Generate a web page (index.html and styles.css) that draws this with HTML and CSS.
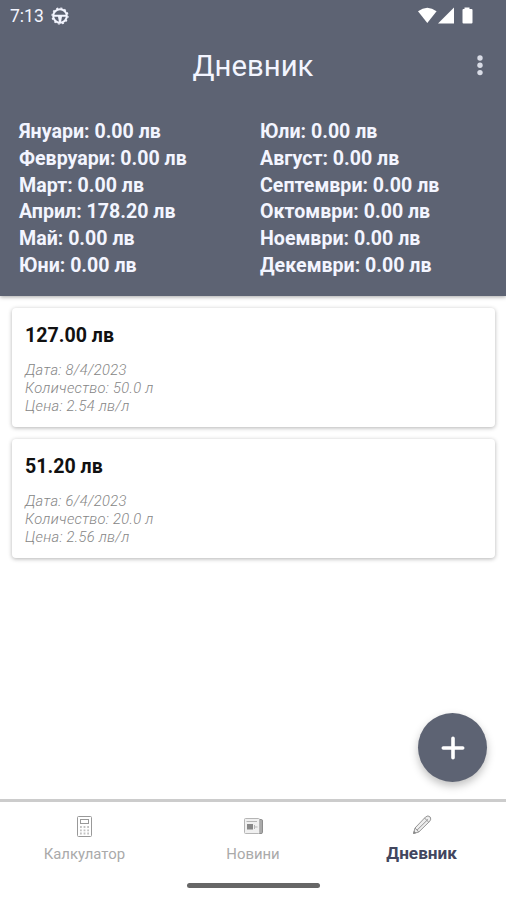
FILE: index.html
```html
<!DOCTYPE html>
<html lang="bg">
<head>
<meta charset="utf-8">
<title>Дневник</title>
<link rel="stylesheet" href="styles.css">
</head>
<body>
<div class="app">
  <header class="header">
    <div class="status">
      <span class="clock">7:13</span>
      <svg class="wheel" width="18" height="18" viewBox="0 0 18 18"><circle cx="9" cy="9" r="6.800" fill="none" stroke="#f3f5ff" stroke-width="2"/><circle cx="9" cy="9" r="8" fill="none" stroke="#f3f5ff" stroke-width="1.200" stroke-dasharray="2 2.200"/><path d="M2.500 7.700H15.500V9.700H11L10 15H8L7 9.700H2.500Z" fill="#f3f5ff"/></svg>
      <svg class="signals" width="56" height="18" viewBox="0 0 56 18" fill="#fff"><path d="M0 4.200Q9.300-2.800 18.600 4.200L9.300 16Z"/><path d="M20 16.500L36 .5V16.500Z"/><path d="M44.500 3Q44.500 2 45.500 2H46.500V.5H51.500V2H53.500Q54.500 2 54.500 3V15.500Q54.500 16.500 53.500 16.500H45.500Q44.500 16.500 44.500 15.500Z"/></svg>
    </div>
    <div class="toolbar">
      <h1>Дневник</h1>
      <svg class="more" width="8" height="22" viewBox="0 0 8 22" fill="#d9dce6"><circle cx="4" cy="3" r="2.700"/><circle cx="4" cy="10.300" r="2.700"/><circle cx="4" cy="17.600" r="2.700"/></svg>
    </div>
    <div class="months">
      <div><p>Януари: 0.00 лв</p><p>Февруари: 0.00 лв</p><p>Март: 0.00 лв</p><p>Април: 178.20 лв</p><p>Май: 0.00 лв</p><p>Юни: 0.00 лв</p></div>
      <div><p>Юли: 0.00 лв</p><p>Август: 0.00 лв</p><p>Септември: 0.00 лв</p><p>Октомври: 0.00 лв</p><p>Ноември: 0.00 лв</p><p>Декември: 0.00 лв</p></div>
    </div>
  </header>
  <main class="list">
    <article class="card"><h2>127.00 лв</h2><p>Дата: 8/4/2023</p><p>Количество: 50.0 л</p><p>Цена: 2.54 лв/л</p></article>
    <article class="card"><h2>51.20 лв</h2><p>Дата: 6/4/2023</p><p>Количество: 20.0 л</p><p>Цена: 2.56 лв/л</p></article>
    <button class="fab" aria-label="Добави"><svg width="24" height="24" viewBox="0 0 24 24"><path d="M12 2.300V21.700M2.300 12H21.700" stroke="#fff" stroke-width="3.600" stroke-linecap="round"/></svg></button>
  </main>
  <nav class="tabs">
    <div class="tab"><svg width="24" height="24" viewBox="0 0 24 24" fill="none" stroke="#999"><rect x="5.500" y="2.500" width="14" height="20" rx="1"/><rect x="8.500" y="5.500" width="8" height="4"/><path d="M8 13H17M8 16.300H17M8 19.500H17" stroke-width="1.800" stroke-dasharray="1.800 1.800" stroke="#c2c2c2"/></svg><span>Калкулатор</span></div>
    <div class="tab"><svg width="24" height="24" viewBox="0 0 24 24" fill="none" stroke="#b5b5b5"><path d="M18 5.500H20.500Q21.500 5.500 21.500 7V18.500Q21.500 19.500 20 19.500H18" fill="#aaa" stroke="#8d8d8d"/><rect x="3.500" y="4.500" width="15" height="15" rx="1" fill="#f0f0f0"/><rect x="6" y="10" width="6" height="5.500" fill="#888" stroke="none"/><path d="M5.500 7.500H16M13.500 11V15M14 13H16.500"/></svg><span>Новини</span></div>
    <div class="tab active"><svg width="24" height="24" viewBox="0 0 24 24" fill="#eee" stroke="#959595" stroke-linejoin="round"><path d="M3.500 19.500L5 14L15.500 3Q18 .8 20.200 3Q21.500 5.200 19.800 7.200L8.800 18Z"/><path d="M5 14L8.800 18M7 16.200L18 5.300M14.500 4L18.700 8.200" fill="none"/><path d="M3.500 19.500L4.200 17.300L5.700 18.900Z" fill="#777"/></svg><span>Дневник</span></div>
  </nav>
  <footer class="gesture"><i></i></footer>
</div>
</body>
</html>
```
FILE: styles.css
```css
* { box-sizing: border-box; }
body { margin: 0; font-family: Roboto, sans-serif; background: #fff; }
h1, h2, p { margin: 0; }
svg { display: block; flex: none; }
.app { height: 900px; display: flex; flex-direction: column; overflow: hidden; }
.header { height: 296px; flex: none; background: #5d6373; color: #f3f5ff; box-shadow: 0 1px 4px rgba(0,0,0,.35); position: relative; }
.status { height: 31px; display: flex; align-items: center; padding: 0 32px 0 10px; }
.clock { width: 41px; font-size: 17.5px; color: #f3f5ff; }
.signals { margin-left: auto; }
.toolbar { height: 69px; display: grid; grid-template-columns: 1fr auto 1fr; align-items: center; padding: 0 22px; }
.toolbar h1 { grid-column: 2; font-size: 29.3px; font-weight: 400; line-height: 36px; }
.more { justify-self: end; }
.months { display: grid; grid-template-columns: 241px 1fr; padding: 19px 19px 0; font-size: 19.6px; font-weight: 700; line-height: 26.8px; white-space: nowrap; }
.list { flex: 1; padding: 12px 11px 0 12px; display: flex; flex-direction: column; gap: 12px; position: relative; }
.card { height: 119px; border-radius: 4px; padding: 15px 13px; background: #fff; box-shadow: 0 1px 4px rgba(0,0,0,.3); }
.card h2 { font-size: 19.6px; line-height: 25px; font-weight: 700; color: #111; margin-bottom: 13px; }
.card p { font-size: 14.7px; line-height: 18px; font-style: italic; font-weight: 300; letter-spacing: .3px; color: #858585; }
.fab { position: absolute; right: 19px; bottom: 17px; width: 69px; height: 69px; padding: 0; border: 0; border-radius: 50%; background: #5d6373; display: grid; place-items: center; box-shadow: 0 4px 8px rgba(0,0,0,.25); }
.tabs { height: 72px; flex: none; display: grid; grid-template-columns: repeat(3, 1fr); border-top: 3px solid #ccc; }
.tab { display: flex; flex-direction: column; align-items: center; padding-top: 12px; font-size: 14.9px; line-height: 20px; color: #aaa; }
.tab span { margin-top: 6px; }
.tab.active { color: #42465e; font-weight: 700; font-size: 17.2px; }
.tab.active span { margin-top: 5px; }
.gesture { height: 29px; flex: none; display: flex; justify-content: center; padding-top: 12px; }
.gesture i { width: 133px; height: 5px; border-radius: 3px; background: #666; }
```
